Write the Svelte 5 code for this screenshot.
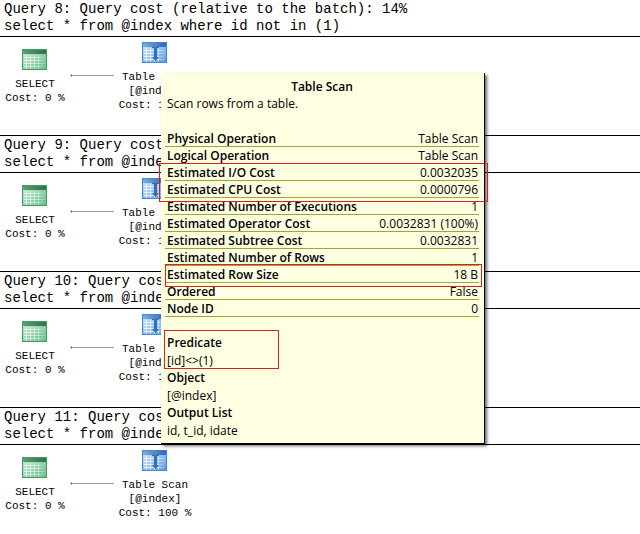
<script>
    const queries = [
        { id: 8, cost: 14, sql: 'select * from @index where id not in (1)' },
        { id: 9, cost: 14, sql: 'select * from @index where id <> 1' },
        { id: 10, cost: 14, sql: 'select * from @index where id > 1' },
        { id: 11, cost: 14, sql: 'select * from @index where id < 1' }
    ];

    const properties = [
        { name: 'Physical Operation', value: 'Table Scan' },
        { name: 'Logical Operation', value: 'Table Scan' },
        { name: 'Estimated I/O Cost', value: '0.0032035' },
        { name: 'Estimated CPU Cost', value: '0.0000796' },
        { name: 'Estimated Number of Executions', value: '1' },
        { name: 'Estimated Operator Cost', value: '0.0032831 (100%)' },
        { name: 'Estimated Subtree Cost', value: '0.0032831' },
        { name: 'Estimated Number of Rows', value: '1' },
        { name: 'Estimated Row Size', value: '18 B' },
        { name: 'Ordered', value: 'False' },
        { name: 'Node ID', value: '0' }
    ];

    const details = [
        { name: 'Predicate', value: '[id]<>(1)' },
        { name: 'Object', value: '[@index]' },
        { name: 'Output List', value: 'id, t_id, idate' }
    ];
</script>

<svelte:head>
    <title>Execution plan</title>
</svelte:head>

{#snippet gridIcon(kind)}
    <svg class="icon {kind}" width="26" height="22" viewBox="0 0 26 22" aria-hidden="true">
        <defs>
            <linearGradient id="green-body" x1="0" y1="0" x2="1" y2="1">
                <stop offset="0" stop-color="#c4ecce" />
                <stop offset="1" stop-color="#62bd83" />
            </linearGradient>
            <linearGradient id="green-head" x1="0" y1="0" x2="1" y2="0">
                <stop offset="0" stop-color="#5f9c79" />
                <stop offset="1" stop-color="#2b7048" />
            </linearGradient>
            <linearGradient id="blue-body" x1="0" y1="0" x2="1" y2="1">
                <stop offset="0" stop-color="#d4e8fc" />
                <stop offset="1" stop-color="#5b9ae0" />
            </linearGradient>
            <linearGradient id="blue-head" x1="0" y1="0" x2="1" y2="0">
                <stop offset="0" stop-color="#78acdf" />
                <stop offset="1" stop-color="#2866b4" />
            </linearGradient>
            <linearGradient id="grid-fade" gradientUnits="userSpaceOnUse" x1="0" y1="0" x2="24" y2="0">
                <stop offset="0" stop-color="#fff" stop-opacity="0.9" />
                <stop offset="1" stop-color="#fff" stop-opacity="0.2" />
            </linearGradient>
        </defs>
        <rect x="1" y="1" width="24" height="20" fill="url(#{kind}-body)" />
        <path
            d="M2 8.5H22M2 11.5H22M2 14.5H22M2 17.5H22M4.5 6V20M8.5 6V20M12.5 6V20M16.5 6V20"
            stroke="url(#grid-fade)"
        />
        <rect x="1" y="1" width="24" height="4" fill="url(#{kind}-head)" />
        <rect class="frame" x="0.5" y="0.5" width="24" height="20" fill="none" />
        {#if kind === 'blue'}
            <path d="M12 5h3v10h2l-3.500 4L10 15h2z" fill="#2c70b8" />
            <path d="M10 5.500h7" stroke="#2c70b8" />
        {/if}
    </svg>
{/snippet}

<main>
    {#each queries as query}
        <section class="query">
            <header>
                <div>Query {query.id}: Query cost (relative to the batch): {query.cost}%</div>
                <div>{query.sql}</div>
            </header>
            <div class="plan">
                <div class="node select">
                    {@render gridIcon('green')}
                    <span>SELECT</span>
                    <span>Cost: 0 %</span>
                </div>
                <svg class="arrow" width="44" height="5" viewBox="0 0 44 5" aria-hidden="true">
                    <path d="M1 2.500H44" stroke="#9a9a9a" />
                    <path d="M0 2.500L2 1V4z" fill="#777" />
                </svg>
                <div class="node scan">
                    {@render gridIcon('blue')}
                    <span>Table Scan</span>
                    <span>[@index]</span>
                    <span>Cost: 100 %</span>
                </div>
            </div>
        </section>
    {/each}

    <aside class="tooltip" role="tooltip">
        <h2>Table Scan</h2>
        <p>Scan rows from a table.</p>

        <table>
            <tbody>
                {#each properties as property}
                    <tr>
                        <th scope="row">{property.name}</th>
                        <td>{property.value}</td>
                    </tr>
                {/each}
            </tbody>
        </table>

        <dl>
            {#each details as detail}
                <dt>{detail.name}</dt>
                <dd>{detail.value}</dd>
            {/each}
        </dl>

        <div class="mark costs"></div>
        <div class="mark row-size"></div>
        <div class="mark predicate"></div>
    </aside>
</main>

<style>
    :global(body) {
        background-color: #fff;
        color: #000;
    }

    main {
        position: relative;
        font-family: "Liberation Mono", "Courier New", monospace;
        overflow: hidden;
    }

    header {
        padding: 1px 4px;
        border-bottom: 1px solid #000;
        font-size: 14px;
        line-height: 17px;
        white-space: nowrap;
    }

    .query + .query header {
        border-top: 1px solid #000;
    }

    .plan {
        display: flex;
        align-items: flex-start;
        padding-bottom: 23px;
    }

    .query:last-of-type .plan {
        padding-bottom: 0;
    }

    .node {
        display: flex;
        flex-direction: column;
        align-items: center;
        font-size: 11px;
        line-height: 14px;
        white-space: nowrap;
    }

    .select {
        width: 70px;
        padding-top: 12px;
    }

    .scan {
        width: 82px;
        padding-top: 5px;
    }

    .icon {
        display: block;
        margin-bottom: 6px;
    }

    .green .frame {
        stroke: #4c9a6c;
    }

    .blue .frame {
        stroke: #4585cb;
    }

    .arrow {
        margin-top: 36px;
    }

    .tooltip {
        position: absolute;
        top: 73px;
        left: 161px;
        box-sizing: border-box;
        width: 324px;
        padding: 5px 5px 4px 4px;
        border-right: 1px solid #000;
        border-bottom: 1px solid #000;
        background-color: #ffffe1;
        box-shadow: 2px 2px 3px rgba(0, 0, 0, 0.6);
        font-family: "Open Sans", "Segoe UI", sans-serif;
        font-size: 12px;
        line-height: 17px;
    }

    h2 {
        margin: 0;
        font-size: 12px;
        font-weight: 600;
        text-align: center;
    }

    p {
        margin: 0 2px 18px;
    }

    table {
        width: 100%;
        border-collapse: separate;
        border-spacing: 0;
    }

    th,
    td {
        padding: 1px 2px 0;
        border-bottom: 1px solid #a5a530;
        line-height: 15px;
        white-space: nowrap;
    }

    th {
        font-weight: 600;
        text-align: left;
    }

    td {
        padding-right: 1px;
        text-align: right;
    }

    dl {
        margin: 17px 2px 0;
    }

    dt {
        font-weight: 600;
        line-height: 18px;
    }

    dd {
        margin: 0;
    }

    /* red frames drawn over the highlighted properties */
    .mark {
        position: absolute;
        box-sizing: border-box;
        border: 1px solid #d8201c;
        pointer-events: none;
    }

    .costs {
        top: 90px;
        left: -2px;
        right: -4px;
        height: 39px;
    }

    .row-size {
        top: 191px;
        left: 4px;
        right: 2px;
        height: 23px;
    }

    .predicate {
        top: 257px;
        left: 3px;
        width: 115px;
        height: 39px;
    }
</style>
